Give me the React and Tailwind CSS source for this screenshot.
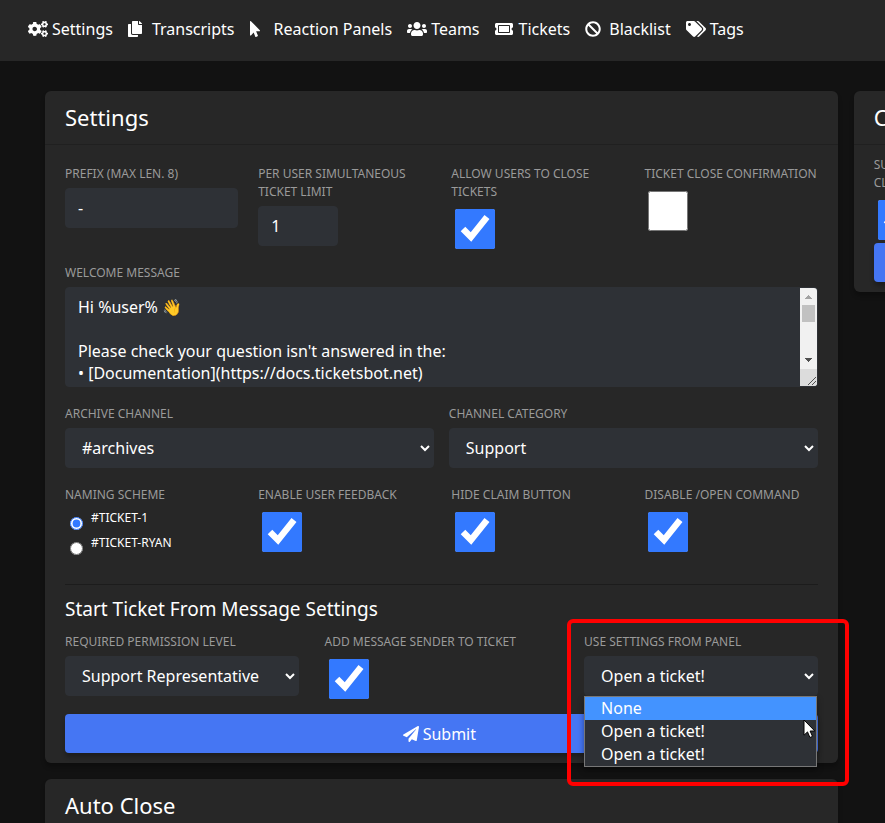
import React from "react";
import {
  FaCogs,
  FaCopy,
  FaMousePointer,
  FaUsers,
  FaTicketAlt,
  FaBan,
  FaTags,
  FaPaperPlane,
} from "react-icons/fa";

const NAV = [
  { label: "Settings", Icon: FaCogs },
  { label: "Transcripts", Icon: FaCopy },
  { label: "Reaction Panels", Icon: FaMousePointer },
  { label: "Teams", Icon: FaUsers },
  { label: "Tickets", Icon: FaTicketAlt },
  { label: "Blacklist", Icon: FaBan },
  { label: "Tags", Icon: FaTags },
];

const WELCOME = `Hi %user% 👋

Please check your question isn't answered in the:
• [Documentation](https://docs.ticketsbot.net)`;

const CONTROL =
  "block h-10 rounded border border-[#2e3136] bg-[#2e3136] px-3 text-base text-white outline-none";

function Label({ htmlFor, children }) {
  return (
    <label
      htmlFor={htmlFor}
      className="mb-[5px] block pt-px text-xs leading-[18px] text-[#9a9a9a] uppercase"
    >
      {children}
    </label>
  );
}

function CheckField({ id, label, checked }) {
  return (
    <div>
      <Label htmlFor={id}>{label}</Label>
      <input
        id={id}
        type="checkbox"
        defaultChecked={checked}
        className="mt-2 mb-[3px] ml-1 block size-10 accent-[#3379ff]"
      />
    </div>
  );
}

function SelectField({ id, label, options, children }) {
  return (
    <div className="relative">
      <Label htmlFor={id}>{label}</Label>
      <select id={id} className={`${CONTROL} w-full`}>
        {options.map((o, i) => (
          <option key={i}>{o}</option>
        ))}
      </select>
      {children}
    </div>
  );
}

function Card({ title, children }) {
  return (
    <section className="rounded-md bg-[#272727] shadow-[0_4px_4px_rgba(0,0,0,0.25)]">
      <h4 className="border-b border-[#202020] px-5 py-3 text-[22px] leading-[29px]">
        {title}
      </h4>
      <div className="px-5 py-2.5">{children}</div>
    </section>
  );
}

function SubmitButton({ children }) {
  return (
    <button
      type="submit"
      className="flex h-[39px] w-full items-center justify-center gap-1 rounded bg-[#4576f3] pr-1 text-base shadow-[0_4px_4px_rgba(0,0,0,0.25)]"
    >
      <FaPaperPlane className="size-4" />
      {children}
    </button>
  );
}

function TextareaScrollbar() {
  return (
    <div className="flex w-[17px] shrink-0 flex-col bg-[#f1f1f1]" aria-hidden="true">
      <svg viewBox="0 0 17 17" className="size-[17px]" shapeRendering="crispEdges">
        <path d="M5 11h7v-1h-1V9h-1V8H9V7H8v1H7v1H6v1H5z" fill="#a3a3a3" />
      </svg>
      <div className="mx-0.5 h-[17px] bg-[#c1c1c1]" />
      <div className="flex-1" />
      <svg viewBox="0 0 17 17" className="size-[17px]" shapeRendering="crispEdges">
        <path d="M5 6h7v1h-1v1h-1v1H9v1H8V9H7V8H6V7H5z" fill="#505050" />
      </svg>
      <svg viewBox="0 0 17 17" className="size-[17px] bg-[#dcdcdc]">
        <path d="M8 16l8-8M12 16l4-4" stroke="#505050" strokeWidth="1" />
      </svg>
    </div>
  );
}

function OpenPanelList() {
  const options = ["None", "Open a ticket!", "Open a ticket!"];
  return (
    <>
      <div className="absolute inset-x-0 top-16 z-20 mr-px border border-[#777777] bg-[#2e3136] shadow-[0_3px_6px_rgba(0,0,0,0.4)]">
        <ul role="listbox" aria-label="Use settings from panel">
          {options.map((o, i) => (
            <li
              key={i}
              role="option"
              aria-selected={i === 0}
              className={`px-4 leading-[23px] ${i === 0 ? "bg-[#4393ff]" : ""}`}
            >
              {o}
            </li>
          ))}
        </ul>
        <svg viewBox="0 0 13 20" className="absolute top-[22px] right-0 h-5 w-[13px]">
          <path
            d="M1 1v15.2l3.5-3.3 2.4 5.6 2.6-1.1-2.4-5.4h4.7z"
            fill="#fff"
            stroke="#000"
            strokeWidth="1"
          />
        </svg>
      </div>
      <div className="pointer-events-none absolute -top-[13px] -right-[31px] -left-[17px] z-10 h-[167px] rounded-md border-4 border-[#ff0000]" />
    </>
  );
}

function SettingsForm() {
  return (
    <form className="pt-[9px]" onSubmit={(e) => e.preventDefault()}>
      <div className="mb-[11px] grid grid-cols-4 gap-x-5">
        <div>
          <Label htmlFor="prefix">Prefix (max len. 8)</Label>
          <input id="prefix" type="text" defaultValue="-" className={`${CONTROL} w-full`} />
        </div>
        <div>
          <Label htmlFor="limit">Per user simultaneous ticket limit</Label>
          <input id="limit" type="text" inputMode="numeric" defaultValue="1" className={`${CONTROL} w-20`} />
        </div>
        <CheckField id="users-close" label="Allow users to close tickets" checked />
        <CheckField id="confirm" label="Ticket close confirmation" />
      </div>

      <div className="mb-[17px]">
        <Label htmlFor="welcome">Welcome message</Label>
        <div className="flex h-[100px] overflow-hidden rounded border border-[#2e3136] bg-[#2e3136]">
          <textarea
            id="welcome"
            defaultValue={WELCOME}
            className="block min-w-0 flex-1 resize-none overflow-hidden bg-transparent px-3 pt-2 text-base leading-[22px] outline-none"
          />
          <TextareaScrollbar />
        </div>
      </div>

      <div className="mb-[17px] grid grid-cols-2 gap-x-[15px]">
        <SelectField id="archive" label="Archive channel" options={["#archives"]} />
        <SelectField id="category" label="Channel category" options={["Support"]} />
      </div>

      <div className="grid grid-cols-4 gap-x-5">
        <fieldset>
          <legend className="mb-1 block pt-px text-xs leading-[18px] text-[#9a9a9a] uppercase">
            Naming scheme
          </legend>
          {["#ticket-1", "#ticket-ryan"].map((name, i) => (
            <label
              key={name}
              className="flex h-[25px] items-start gap-2 pl-[5px] text-xs leading-[20px] uppercase"
            >
              <input
                type="radio"
                name="naming"
                defaultChecked={i === 0}
                className="mt-[9px] size-[13px] accent-[#3379ff]"
              />
              {name}
            </label>
          ))}
        </fieldset>
        <CheckField id="feedback" label="Enable user feedback" checked />
        <CheckField id="hide-claim" label="Hide claim button" checked />
        <CheckField id="disable-open" label="Disable /open command" checked />
      </div>

      <hr className="mt-[26px] border-[#1c1c1c]" />

      <h5 className="mt-2.5 mb-2 text-[19px] leading-[29px]">
        Start Ticket From Message Settings
      </h5>
      <div className="mb-3 grid grid-cols-3 gap-x-[26px]">
        <SelectField
          id="permission"
          label="Required permission level"
          options={["Support Representative"]}
        />
        <CheckField id="add-sender" label="Add message sender to ticket" checked />
        <SelectField id="panel" label="Use settings from panel" options={["Open a ticket!"]}>
          <OpenPanelList />
        </SelectField>
      </div>
      <SubmitButton>Submit</SubmitButton>
    </form>
  );
}

export default function App() {
  return (
    <div className="min-h-screen overflow-hidden bg-[#121212] font-['Noto_Sans',sans-serif] text-base text-white">
      <nav className="flex h-[61px] items-center gap-[15px] bg-[#272727] px-7 pb-[3px]">
        {NAV.map(({ label, Icon }) => (
          <a key={label} href="#" className="flex shrink-0 items-center gap-1">
            <Icon className="h-4 w-5 shrink-0" preserveAspectRatio="xMinYMid meet" />
            {label}
          </a>
        ))}
      </nav>
      <main className="h-[calc(100vh-61px)] overflow-hidden px-[45px] pt-[30px]">
        <div className="grid min-w-[1205px] grid-cols-[2fr_1fr] items-start gap-x-4">
          <div className="flex min-w-0 flex-col gap-4">
            <Card title="Settings">
              <SettingsForm />
            </Card>
            <Card title="Auto Close">
              <div className="h-10" />
            </Card>
          </div>
          <Card title="Claim Settings">
            <form onSubmit={(e) => e.preventDefault()}>
              <div className="w-1/2">
                <CheckField id="reps-view" label="Support reps can view claimed tickets" checked />
              </div>
              <SubmitButton>Submit</SubmitButton>
            </form>
          </Card>
        </div>
      </main>
    </div>
  );
}
